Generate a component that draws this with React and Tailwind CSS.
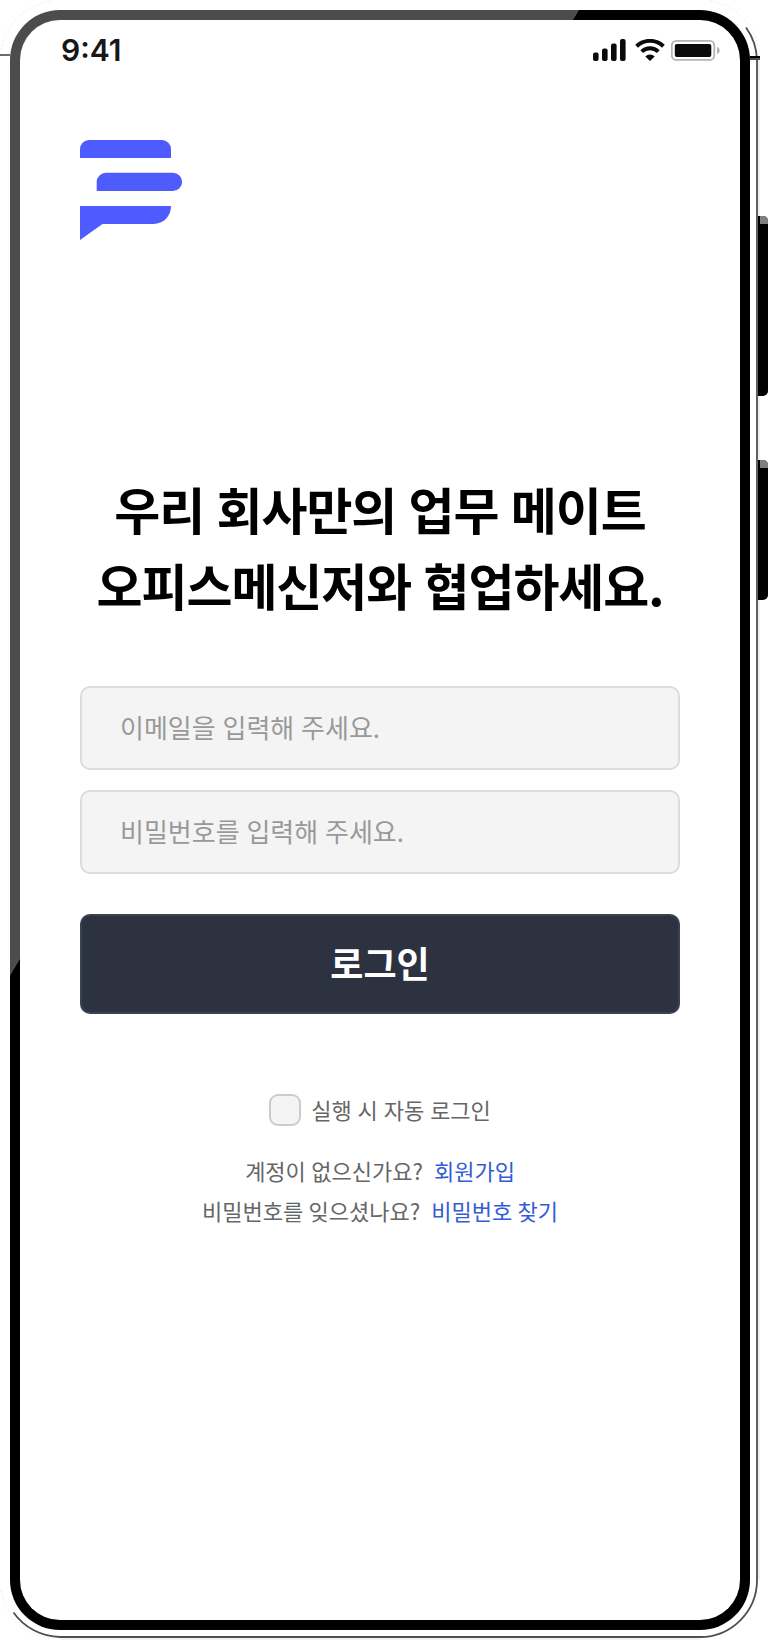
import React, { useState } from "react";

const SIDE_BUTTONS = [
  { id: "volume", className: "top-[216px] h-[180px]" },
  { id: "power", className: "top-[460px] h-[140px]" },
];

const LINKS = [
  { question: "계정이 없으신가요?", action: "회원가입" },
  { question: "비밀번호를 잊으셨나요?", action: "비밀번호 찾기" },
];

function SignalIcon() {
  return (
    <svg width="34" height="22" viewBox="0 0 34 22" fill="#0a0a0a">
      <rect x="0" y="13.5" width="5.6" height="8.5" rx="2" />
      <rect x="9" y="9.5" width="5.6" height="12.5" rx="2" />
      <rect x="18" y="4.5" width="5.6" height="17.5" rx="2" />
      <rect x="27" y="0" width="5.6" height="22" rx="2" />
    </svg>
  );
}

function WifiIcon() {
  return (
    <svg width="30" height="22" viewBox="0 0 30 22" fill="none" stroke="#0a0a0a" strokeWidth="4">
      <path d="M1.6 7.2 A19.5 19.5 0 0 1 28.4 7.2" />
      <path d="M6.7 12.6 A12 12 0 0 1 23.3 12.6" />
      <path d="M15 22 L10.3 17.4 A6.8 6.8 0 0 1 19.7 17.4 Z" fill="#0a0a0a" stroke="none" />
    </svg>
  );
}

function BatteryIcon() {
  return (
    <svg width="50" height="22" viewBox="0 0 50 22">
      <rect x="0.8" y="1.9" width="42.5" height="19" rx="4.5" fill="none" stroke="#b3b3b3" strokeWidth="1.8" />
      <rect x="3.8" y="4.9" width="36.5" height="13" rx="2" fill="#0a0a0a" />
      <path d="M46 7.7 C49.6 9.2 49.6 13.7 46 15.3 Z" fill="#b3b3b3" />
    </svg>
  );
}

function Logo() {
  return (
    <svg width="103" height="100" viewBox="0 0 103 100" fill="#4d5bff">
      <path d="M0 18 V9 A9 9 0 0 1 9 0 H82 A9 9 0 0 1 91 9 V18 Z" />
      <path d="M16.7 51 V42 A9.3 9.3 0 0 1 26 32.7 H93 A9.1 9.1 0 0 1 93 51 Z" />
      <path d="M0 66 H91 A17.5 17.5 0 0 1 73.5 84 H22.5 L0 100 Z" />
    </svg>
  );
}

// thin metal edge around the phone body
function DeviceEdge() {
  return (
    <svg className="absolute left-0 top-0 pointer-events-none" width="768" height="1640" viewBox="0 0 768 1640" fill="none">
      <path d="M759 60 V1580" stroke="#f0f0f0" strokeWidth="2" />
      <path d="M60 1639 H700" stroke="#f3f3f3" strokeWidth="2" />
      <path d="M1 50 A60 60 0 0 1 50 1" stroke="#eeeeee" strokeDasharray="2 2" />
      <path d="M710 0.5 A60 60 0 0 1 759 50" stroke="#eeeeee" strokeDasharray="2 2" />
      <path d="M1 1590 A60 60 0 0 0 50 1639" stroke="#eeeeee" strokeDasharray="2 2" />
      <path d="M746 27.5 A58 58 0 0 1 757 60 V1580 A57 57 0 0 1 700 1637 H60 A58 58 0 0 1 13.5 1612.5" stroke="#4f4f4f" strokeWidth="1.8" />
      <path d="M0 55 H10" stroke="#6b6b6b" strokeWidth="2" />
      <path d="M750 57 H760" stroke="#000000" strokeWidth="2" />
      <path d="M750 59 H760" stroke="#4c4c4c" strokeWidth="2" />
    </svg>
  );
}

function StatusBar() {
  return (
    <div className="flex items-start justify-between h-[120px] pl-[41px] pr-[19px]">
      <span className="mt-[12px] text-[30px] leading-[36px] font-semibold text-[#171717] font-[Inter,sans-serif]">
        9:41
      </span>
      <div className="flex items-start mt-[19px]">
        <SignalIcon />
        <div className="ml-[8px]">
          <WifiIcon />
        </div>
        <div className="ml-[6px]">
          <BatteryIcon />
        </div>
      </div>
    </div>
  );
}

function Field({ type, value, onChange, placeholder }) {
  return (
    <input
      type={type}
      value={value}
      onChange={onChange}
      placeholder={placeholder}
      className="block w-full h-[84px] px-[38px] pb-1 rounded-[10px] border-2 border-[#dcdcdc] bg-[#f4f4f4] text-[26px] [word-spacing:1px] text-gray-800 placeholder:text-[#999999] focus:outline-none"
    />
  );
}

function App() {
  const [email, setEmail] = useState("");
  const [password, setPassword] = useState("");
  const [autoLogin, setAutoLogin] = useState(false);

  return (
    <div className="relative w-[768px] h-[1640px] p-[10px] bg-white overflow-hidden font-['Noto_Sans_CJK_KR',sans-serif]">
      <div className="w-[740px] h-[1620px] p-[10px] rounded-[50px] bg-[linear-gradient(120.5deg,#4c4c4c_33.56%,#000000_33.6%)]">
        <div className="h-full rounded-[40px] bg-white">
          <StatusBar />

          <main className="w-[600px] ml-[60px]">
            <Logo />

            <h1 className="mt-[230px] text-center text-[50px] leading-[76px] tracking-[-1.05px] [word-spacing:2px] font-bold text-black whitespace-nowrap">
              우리 회사만의 업무 메이트
              <br />
              오피스메신저와 협업하세요.
            </h1>

            <div className="flex flex-col gap-5 mt-[64px]">
              <Field
                type="email"
                value={email}
                onChange={(e) => setEmail(e.target.value)}
                placeholder="이메일을 입력해 주세요."
              />
              <Field
                type="password"
                value={password}
                onChange={(e) => setPassword(e.target.value)}
                placeholder="비밀번호를 입력해 주세요."
              />
            </div>

            <button className="block w-full h-[100px] mt-10 pb-1 rounded-[10px] border-2 border-[#384252] bg-[#2c3240] text-[36px] font-bold text-white">
              로그인
            </button>

            <label className="flex items-center justify-center gap-[10px] mt-20 h-8 text-[22px] [word-spacing:1px] text-[#666666]">
              <input
                type="checkbox"
                checked={autoLogin}
                onChange={(e) => setAutoLogin(e.target.checked)}
                className="appearance-none w-8 h-8 rounded-[9px] border-2 border-[#cccccc] bg-[#f4f4f4] checked:bg-[#4d5bff]"
              />
              <span className="pb-[2px]">실행 시 자동 로그인</span>
            </label>

            <div className="mt-[24px] text-[22px] leading-[40px] text-[#666666]">
              {LINKS.map((link) => (
                <p key={link.action} className="flex justify-center gap-[11px] [word-spacing:0.5px]">
                  {link.question}
                  <a href="#" className="text-[#335cd6]">
                    {link.action}
                  </a>
                </p>
              ))}
            </div>
          </main>
        </div>
      </div>

      <DeviceEdge />
      {SIDE_BUTTONS.map((button) => (
        <div
          key={button.id}
          className={`absolute left-[758px] w-[10px] rounded-r-[5px] bg-black overflow-hidden ${button.className}`}
        >
          <div className="ml-[2px] h-2 bg-[#808080]" />
        </div>
      ))}
    </div>
  );
}

export default App;
